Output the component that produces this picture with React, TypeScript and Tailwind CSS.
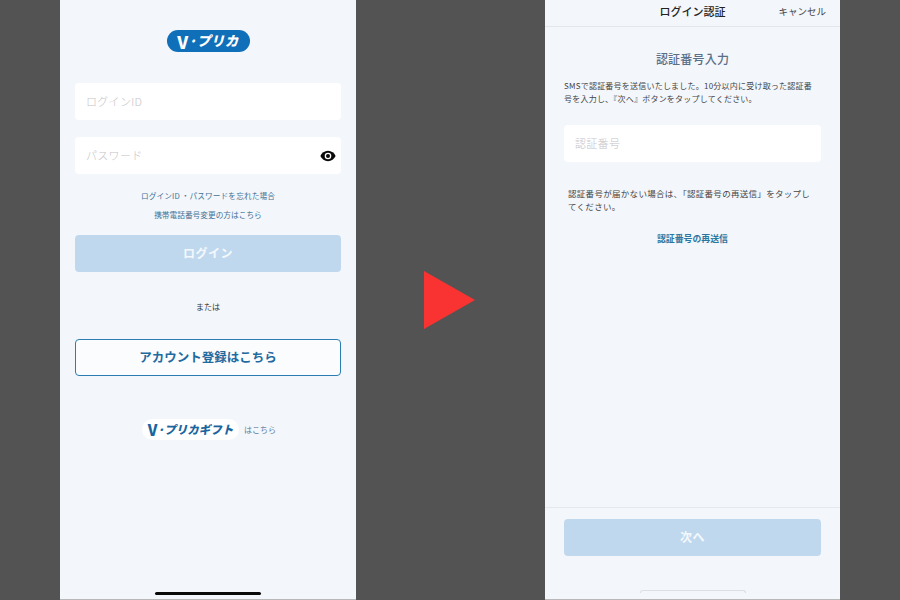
const font = { fontFamily: '"Noto Sans CJK JP", "Liberation Sans", sans-serif' };

function EyeIcon() {
  return (
    <svg width="16" height="12" viewBox="0 0 16 12" aria-hidden="true">
      <path d="M8 .8C4.6.8 1.7 2.9.4 6c1.3 3.1 4.2 5.2 7.6 5.2s6.3-2.1 7.6-5.2C14.300 2.900 11.400.8 8 .8z" fill="#0a0a0a" />
      <circle cx="8" cy="6" r="3.300" fill="#fff" />
      <circle cx="8" cy="6" r="2" fill="#0a0a0a" />
    </svg>
  );
}

function Field({ label, children }: { label: string; children?: React.ReactNode }) {
  return (
    <div className="flex h-[37px] items-center justify-between rounded-[4px] bg-white pl-[11px] pr-[5px]">
      <span className="pb-[1px] text-[11px] font-light leading-none tracking-[0.3px] text-[#c4c4c8]">{label}</span>
      {children}
    </div>
  );
}

function PrimaryButton({ label }: { label: string }) {
  return (
    <div className="flex h-[37px] items-center justify-center rounded-[4px] bg-[#c0d8ee] pb-[1px] text-[12px] font-bold tracking-[0.5px] text-[#f4f8fc]">
      {label}
    </div>
  );
}

function LoginScreen() {
  return (
    <section className="relative flex h-[600px] w-[296px] flex-col border-b border-b-[#b8b8b8] bg-[#f3f6fb] px-[15px]">
      <div className="mt-[30px] flex h-[22px] w-[83px] items-center justify-center self-center rounded-full bg-[#0f6fb8] font-black italic leading-none text-white">
        <span className="text-[17px] not-italic">V</span>
        <span className="text-[13.500px] tracking-[0.4px]">·プリカ</span>
      </div>
      <div className="mt-[31px]"><Field label="ログインID" /></div>
      <div className="mt-[17px]">
        <Field label="パスワード"><EyeIcon /></Field>
      </div>
      <p className="mt-[16px] text-center text-[7.700px] leading-[12px] tracking-[0.1px] text-[#3f7297]">ログインID ・パスワードを忘れた場合</p>
      <p className="mt-[7px] text-center text-[7.700px] leading-[12px] text-[#3f7297]">携帯電話番号変更の方はこちら</p>
      <div className="mt-[14px]"><PrimaryButton label="ログイン" /></div>
      <p className="mt-[29px] text-center text-[8px] leading-[12px] text-[#333]">または</p>
      <div className="mt-[26px] flex h-[37px] items-center justify-center rounded-[4px] border border-[#2b7cb0] bg-[#fbfcfe] text-[12.500px] font-bold text-[#1f6a9f]">
        アカウント登録はこちら
      </div>
      <div className="mt-[43px] flex items-center justify-center pl-[2px]">
        <div className="flex h-[21px] w-[97px] items-center justify-center rounded-full bg-white font-black italic leading-none text-[#1a659d]">
          <span className="text-[15px] not-italic">V</span>
          <span className="text-[11.500px]">·プリカギフト</span>
        </div>
        <span className="ml-[5px] text-[8px] text-[#5e7f9b]">はこちら</span>
      </div>
      <div className="absolute bottom-[4px] left-[95px] h-[3px] w-[106px] rounded-full bg-[#0a0a0a]" />
    </section>
  );
}

function VerifyScreen() {
  return (
    <section className="flex h-[600px] w-[295px] flex-col border-b border-b-[#b8b8b8] bg-[#f3f6fb]">
      <header className="relative flex h-[27px] shrink-0 items-center justify-center border-b border-b-[#e3e6ea]">
        <span className="pb-[3px] text-[11px] font-medium text-[#222]">ログイン認証</span>
        <span className="absolute right-[14px] top-[4px] text-[9.500px] text-[#444]">キャンセル</span>
      </header>
      <div className="flex flex-1 flex-col px-[19px]">
        <h1 className="mt-[23px] text-center text-[12px] font-medium leading-[18px] tracking-[0.2px] text-[#5b6f88]">認証番号入力</h1>
        <p className="mt-[12px] whitespace-nowrap text-[8px] leading-[12.500px] tracking-[0.22px] text-[#444]">
          SMSで認証番号を送信いたしました。10分以内に受け取った認証番<br />号を入力し、『次へ』ボタンをタップしてください。
        </p>
        <div className="mt-[20px]"><Field label="認証番号" /></div>
        <p className="mt-[25px] whitespace-nowrap pl-[4px] text-[8.500px] leading-[12.500px] tracking-[0.3px] text-[#444]">
          認証番号が届かない場合は、「認証番号の再送信」をタップし<br />てください。
        </p>
        <p className="mt-[21px] text-center text-[8.900px] font-bold leading-[12px] text-[#2a769f]">認証番号の再送信</p>
      </div>
      <footer className="h-[92px] shrink-0 border-t border-t-[#e5e8ec] px-[19px] pt-[11px]">
        <PrimaryButton label="次へ" />
        <div className="mx-auto mt-[34px] h-[3px] w-[106px] rounded-t-[3px] border border-b-0 border-[#dcdfe3]" />
      </footer>
    </section>
  );
}

export default function App() {
  return (
    <main className="flex h-[600px] w-[900px] overflow-hidden bg-[#535353] pl-[60px]" style={font}>
      <LoginScreen />
      <div className="flex w-[189px] items-center justify-center">
        <svg width="51" height="58" viewBox="0 0 51 58" aria-hidden="true" className="mr-[2px]">
          <polygon points="0,0 51,29 0,58" fill="#f93232" />
        </svg>
      </div>
      <VerifyScreen />
    </main>
  );
}
